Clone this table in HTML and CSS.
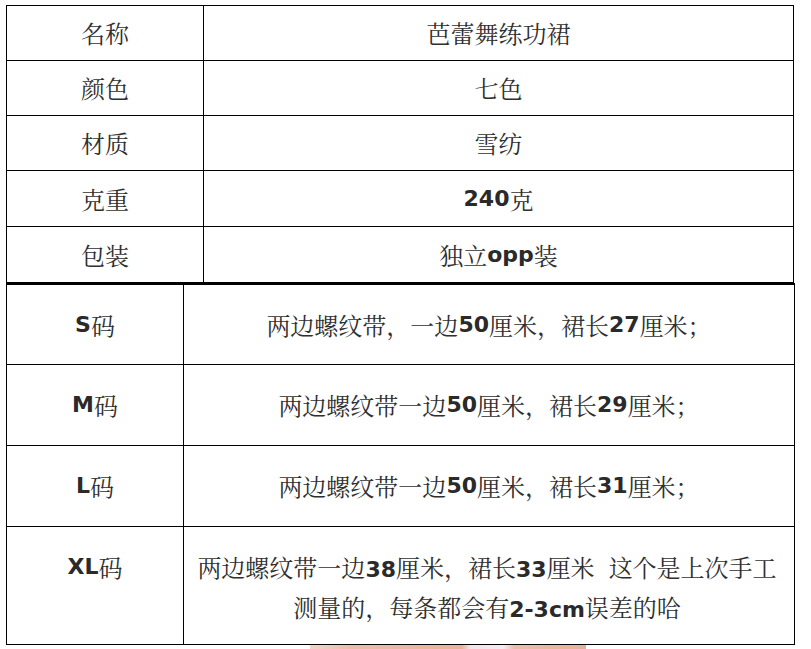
FILE: index.html
```html
<!DOCTYPE html>
<html lang="zh-CN">
<head>
<meta charset="utf-8">
<title>芭蕾舞练功裙</title>
<link rel="stylesheet" href="styles.css">
</head>
<body>
<div class="sheet">
  <div class="spec">
    <div class="cell">名称</div>
    <div class="cell">芭蕾舞练功裙</div>
    <div class="cell">颜色</div>
    <div class="cell">七色</div>
    <div class="cell">材质</div>
    <div class="cell">雪纺</div>
    <div class="cell">克重</div>
    <div class="cell"><span class="b">240</span>克</div>
    <div class="cell">包装</div>
    <div class="cell">独立<span class="b">opp</span>装</div>
  </div>
  <div class="sizes">
    <div class="cell"><span class="b">S</span>码</div>
    <div class="cell">两边螺纹带，一边<span class="b">50</span>厘米，裙长<span class="b">27</span>厘米；</div>
    <div class="cell"><span class="b">M</span>码</div>
    <div class="cell">两边螺纹带一边<span class="b">50</span>厘米，裙长<span class="b">29</span>厘米；</div>
    <div class="cell"><span class="b">L</span>码</div>
    <div class="cell">两边螺纹带一边<span class="b">50</span>厘米，裙长<span class="b">31</span>厘米；</div>
    <div class="cell cell-top"><span class="b">XL</span>码</div>
    <div class="cell cell-multi">两边螺纹带一边<span class="b">38</span>厘米，裙长<span class="b">33</span>厘米<span class="gap"></span>这个是上次手工<br>测量的，每条都会有<span class="b">2-3cm</span>误差的哈</div>
  </div>
  <div class="photo"></div>
</div>
</body>
</html>
```
FILE: styles.css
```css
html, body {
  margin: 0;
  padding: 0;
  background: #ffffff;
}

body {
  font-family: "Noto Serif CJK SC", "Noto Sans CJK SC", "DejaVu Sans", sans-serif;
  font-size: 24px;
  color: #2f2f2f;
}

.sheet {
  padding: 5px 0 0 6px;
}

.spec {
  display: grid;
  grid-template-columns: 197px 590px;
  grid-template-rows: 55px 55px 55px 56px 56px;
  border-top: 1px solid #000;
  border-left: 1px solid #000;
  width: 788px;
  box-sizing: border-box;
}

.sizes {
  display: grid;
  grid-template-columns: 177px 611px;
  grid-template-rows: 80px 81px 81px 118px;
  border-top: 2px solid #000;
  border-left: 1px solid #000;
  width: 789px;
  box-sizing: border-box;
}

.cell {
  box-sizing: border-box;
  border-right: 1px solid #000;
  border-bottom: 1px solid #000;
  display: flex;
  align-items: center;
  justify-content: center;
  white-space: nowrap;
  line-height: 30px;
}

.cell-top {
  padding-bottom: 37px;
}

.cell-multi {
  display: block;
  text-align: center;
  line-height: 37px;
  padding: 21px 4px 0 0;
}

.b {
  font-family: "DejaVu Sans", sans-serif;
  font-weight: bold;
  font-size: 22px;
  color: #2a2a2a;
}

.gap {
  display: inline-block;
  width: 14px;
}

.photo {
  margin-left: 304px;
  width: 276px;
  height: 12px;
  background: linear-gradient(90deg, #f2d6c8 0%, #e9bea6 15%, #e6b49a 55%, #f1e3ea 58%, #f4ecf0 70%, #e8c0a8 74%, #e5b297 100%);
}
```
